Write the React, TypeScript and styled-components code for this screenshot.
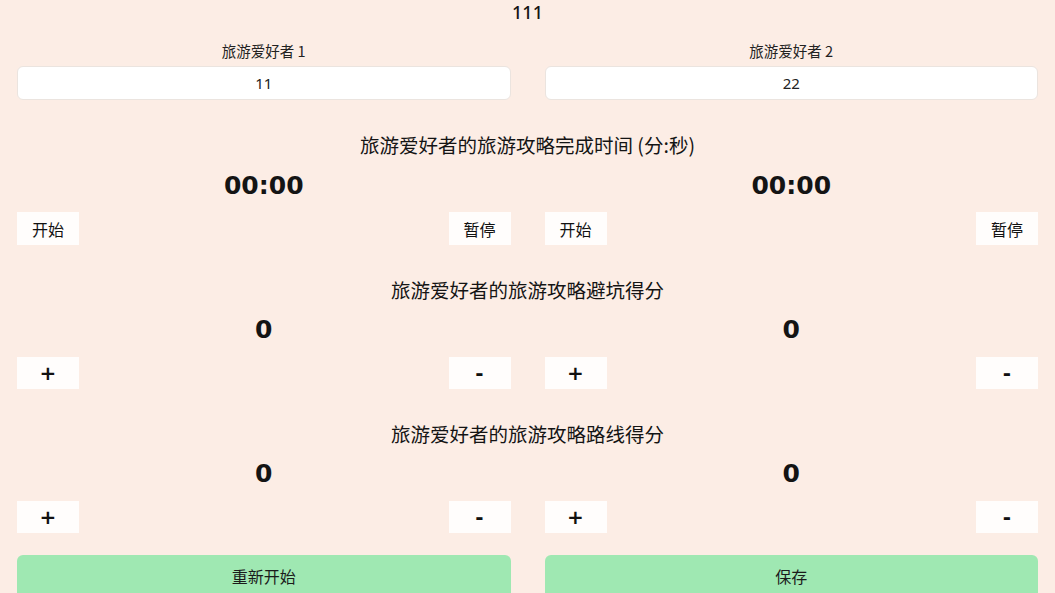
import React, { useState } from 'react';
import styled, { createGlobalStyle } from 'styled-components';

const GlobalStyle = createGlobalStyle`
  html, body {
    margin: 0;
    padding: 0;
    background: #fcede5;
    overflow: hidden;
  }
  body {
    font-family: "Noto Sans CJK SC", "Noto Sans", sans-serif;
    color: #141414;
  }
`;

const Page = styled.div`
  width: 1055px;
  height: 593px;
  padding: 0 17px;
  box-sizing: border-box;
  background: #fcede5;
`;

const Header = styled.div`
  text-align: center;
  font-size: 18px;
  line-height: 24px;
  font-family: "Noto Sans", "Noto Sans CJK SC", sans-serif;
  font-weight: 500;
`;

const Columns = styled.div<{ $top?: number }>`
  display: grid;
  grid-template-columns: 1fr 1fr;
  column-gap: 34px;
  margin-top: ${(p) => p.$top ?? 0}px;
`;

const Column = styled.div`
  display: flex;
  flex-direction: column;
`;

const Label = styled.div`
  text-align: center;
  font-size: 14.5px;
  line-height: 20px;
  margin-top: 17px;
  color: #222;
`;

const NameInput = styled.input`
  margin-top: 5px;
  height: 34px;
  box-sizing: border-box;
  border: 1px solid #ebe4df;
  border-radius: 6px;
  background: #ffffff;
  text-align: center;
  font-family: "Noto Sans", "Noto Sans CJK SC", sans-serif;
  font-size: 15px;
  color: #222;
  outline: none;
`;

const SectionTitle = styled.div`
  margin-top: 32px;
  text-align: center;
  font-size: 19.5px;
  line-height: 26px;
  font-weight: 400;
`;

const Value = styled.div<{ $gap: number }>`
  margin-top: ${(p) => p.$gap}px;
  text-align: center;
  font-family: "DejaVu Sans", sans-serif;
  font-weight: 700;
  font-size: 25px;
  line-height: 32px;
`;

const ButtonRow = styled.div<{ $gap: number }>`
  display: flex;
  justify-content: space-between;
  margin-top: ${(p) => p.$gap}px;
`;

const SmallButton = styled.button<{ $symbol?: boolean; $h: number }>`
  width: 62px;
  height: ${(p) => p.$h}px;
  border: none;
  border-radius: 0;
  background: #fffdfc;
  color: #111;
  padding: 0;
  font-family: ${(p) =>
    p.$symbol ? '"DejaVu Sans", sans-serif' : '"Noto Sans CJK SC", sans-serif'};
  font-size: ${(p) => (p.$symbol ? '20px' : '16px')};
  font-weight: ${(p) => (p.$symbol ? 900 : 400)};
  cursor: pointer;
`;

const ActionButton = styled.button`
  height: 42px;
  border: none;
  border-radius: 6px 6px 0 0;
  background: #9fe8b2;
  font-family: "Noto Sans CJK SC", sans-serif;
  font-size: 16px;
  color: #1b1b1b;
  cursor: pointer;
`;

function TimerBlock() {
  return (
    <Column>
      <Value $gap={12}>00:00</Value>
      <ButtonRow $gap={10}>
        <SmallButton $h={33}>开始</SmallButton>
        <SmallButton $h={33}>暂停</SmallButton>
      </ButtonRow>
    </Column>
  );
}

function ScoreBlock({ value }: { value: number }) {
  return (
    <Column>
      <Value $gap={11}>{value}</Value>
      <ButtonRow $gap={11}>
        <SmallButton $symbol $h={32}>+</SmallButton>
        <SmallButton $symbol $h={32}>-</SmallButton>
      </ButtonRow>
    </Column>
  );
}

export default function App() {
  const [names, setNames] = useState(['11', '22']);

  return (
    <>
      <GlobalStyle />
      <Page>
        <Header>111</Header>
        <Columns>
          {names.map((n, i) => (
            <Column key={i}>
              <Label>旅游爱好者 {i + 1}</Label>
              <NameInput
                value={n}
                onChange={(e) => {
                  const next = [...names];
                  next[i] = e.target.value;
                  setNames(next);
                }}
              />
            </Column>
          ))}
        </Columns>

        <SectionTitle>旅游爱好者的旅游攻略完成时间 (分:秒)</SectionTitle>
        <Columns>
          <TimerBlock />
          <TimerBlock />
        </Columns>

        <SectionTitle>旅游爱好者的旅游攻略避坑得分</SectionTitle>
        <Columns>
          <ScoreBlock value={0} />
          <ScoreBlock value={0} />
        </Columns>

        <SectionTitle>旅游爱好者的旅游攻略路线得分</SectionTitle>
        <Columns>
          <ScoreBlock value={0} />
          <ScoreBlock value={0} />
        </Columns>

        <Columns $top={22}>
          <ActionButton>重新开始</ActionButton>
          <ActionButton>保存</ActionButton>
        </Columns>
      </Page>
    </>
  );
}
